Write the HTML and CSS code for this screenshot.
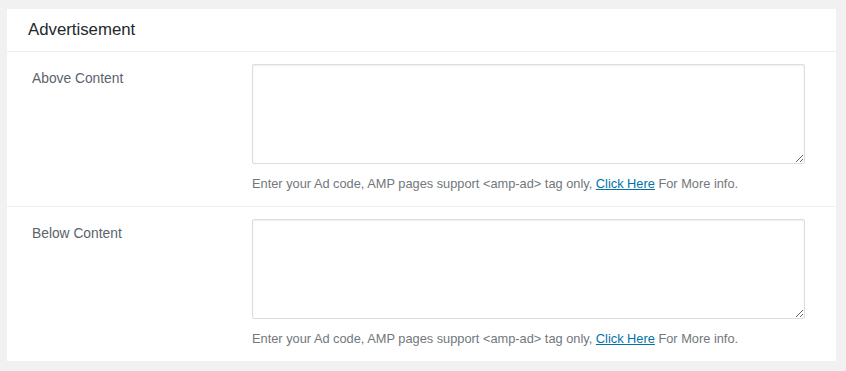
FILE: index.html
```html
<!DOCTYPE html>
<html>
<head>
<meta charset="utf-8">
<link rel="stylesheet" href="styles.css">
</head>
<body>
<div class="panel">
  <div class="panel-header">Advertisement</div>
  <div class="row">
    <div class="label">Above Content</div>
    <div class="field">
      <textarea class="code"></textarea>
      <p class="help">Enter your Ad code, AMP pages support &lt;amp-ad&gt; tag only, <a href="#">Click Here</a> For More info.</p>
    </div>
  </div>
  <div class="row">
    <div class="label">Below Content</div>
    <div class="field">
      <textarea class="code"></textarea>
      <p class="help">Enter your Ad code, AMP pages support &lt;amp-ad&gt; tag only, <a href="#">Click Here</a> For More info.</p>
    </div>
  </div>
</div>
</body>
</html>
```
FILE: styles.css
```css
html, body {
  margin: 0;
  padding: 0;
  background: #f1f1f1;
  font-family: "Liberation Sans", Arial, sans-serif;
}
body {
  padding: 9px 10px 10px 7px;
}
.panel {
  background: #fff;
  width: 829px;
}
.panel-header {
  height: 42px;
  line-height: 42px;
  padding-left: 21px;
  font-size: 16.8px;
  color: #23282d;
  border-bottom: 1px solid #eeeeee;
}
.row {
  display: grid;
  grid-template-columns: 220px 553px;
  padding: 12px 0 13px 25px;
  border-bottom: 1px solid #f0f0f0;
}
.row:last-child {
  border-bottom: none;
}
.label {
  font-size: 13.8px;
  color: #5b636b;
  padding-top: 6px;
  line-height: 17px;
}
.field {
  display: flex;
  flex-direction: column;
}
.code {
  display: block;
  box-sizing: border-box;
  width: 553px;
  height: 100px;
  margin: 0;
  border: 1px solid #dddddd;
  border-radius: 2px;
  box-shadow: inset 0 1px 2px rgba(0,0,0,0.07);
  background: #fff;
  resize: vertical;
}
.help {
  margin: 11px 0 0 0;
  font-size: 12.8px;
  line-height: 18px;
  color: #72777c;
}
.help a {
  color: #0073aa;
  text-decoration: underline;
}
```
